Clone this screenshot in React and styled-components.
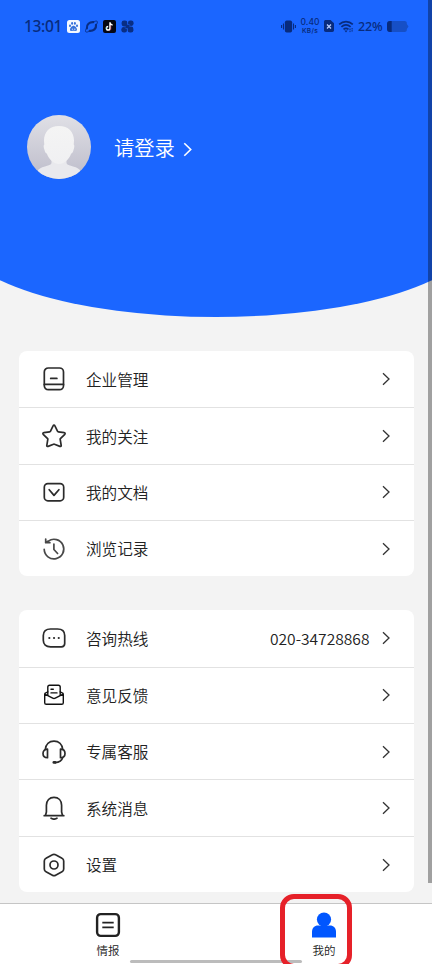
import React from "react";
import styled, { createGlobalStyle } from "styled-components";

const companyItems = [
  { label: "企业管理", icon: <CompanyIcon /> },
  { label: "我的关注", icon: <StarIcon /> },
  { label: "我的文档", icon: <DocumentIcon /> },
  { label: "浏览记录", icon: <HistoryIcon /> },
];

const serviceItems = [
  { label: "咨询热线", icon: <ChatIcon />, value: "020-34728868" },
  { label: "意见反馈", icon: <FeedbackIcon /> },
  { label: "专属客服", icon: <HeadsetIcon /> },
  { label: "系统消息", icon: <BellIcon /> },
  { label: "设置", icon: <SettingsIcon /> },
];

function App() {
  return (
    <Page>
      <GlobalStyle />
      <Hero>
        <StatusBar />
        <Profile>
          <Avatar />
          <Login>请登录</Login>
          <LoginArrow>
            <Chevron width="9" height="15" color="#fff" stroke={1.5} />
          </LoginArrow>
        </Profile>
      </Hero>
      <Menus>
        <MenuCard items={companyItems} />
        <MenuCard items={serviceItems} />
      </Menus>
      <TabBar>
        <Tab>
          <NewsIcon />
          <span>情报</span>
        </Tab>
        <Tab>
          <UserIcon />
          <span>我的</span>
          <Highlight />
        </Tab>
        <HomeIndicator />
      </TabBar>
      <ScrollThumb />
    </Page>
  );
}

export default App;

function StatusBar() {
  return (
    <Status>
      <StatusGroup>
        <Time>13:01</Time>
        <PawIcon />
        <RingIcon />
        <NoteIcon />
        <CloverIcon />
      </StatusGroup>
      <StatusGroup $gap="4px">
        <VibrateIcon />
        <Speed>
          <b>0.40</b>
          <small>KB/s</small>
        </Speed>
        <SimIcon />
        <WifiIcon />
        <Percent>22%</Percent>
        <BatteryIcon />
      </StatusGroup>
    </Status>
  );
}

function MenuCard({ items }) {
  return (
    <Card>
      {items.map((item) => (
        <Row key={item.label}>
          {item.icon}
          <Label>{item.label}</Label>
          {item.value && <Value>{item.value}</Value>}
          <Chevron width="8" height="14" color="#333" stroke={1.3} />
        </Row>
      ))}
    </Card>
  );
}

function Chevron({ width, height, color, stroke }) {
  return (
    <svg width={width} height={height} viewBox="0 0 8 14" fill="none">
      <path d="M1 1.2 7 7l-6 5.8" stroke={color} strokeWidth={stroke} />
    </svg>
  );
}

function Avatar() {
  return (
    <svg width="64" height="64" viewBox="0 0 64 64">
      <defs>
        <linearGradient id="avatarBg" x1="0" y1="0" x2="0" y2="1">
          <stop offset="0" stopColor="#e0e0e6" />
          <stop offset="1" stopColor="#bdbcca" />
        </linearGradient>
        <linearGradient id="avatarBody" x1="0" y1="0" x2="0" y2="1">
          <stop offset="0" stopColor="#f4f4f4" />
          <stop offset="1" stopColor="#f0f0f2" />
        </linearGradient>
        <clipPath id="avatarClip">
          <circle cx="32" cy="32" r="32" />
        </clipPath>
      </defs>
      <g clipPath="url(#avatarClip)">
        <rect width="64" height="64" fill="url(#avatarBg)" />
        <path
          d="M24.500 40v7.500c0 2-1.500 2.500-3.500 3-4.500 1.200-7.500 2.300-10 4.500v9h42v-9c-2.500-2.200-5.500-3.300-10-4.500-2-.5-3.500-1-3.500-3V40z"
          fill="#e9e9ed"
        />
        <path
          d="M32 11c9.500 0 15 6 15 14.500 0 1.500-.2 2.500-.3 4 1 .3.700 3-.2 5.500-.6 2-1.200 3.500-2.300 3.500C42 44.500 37 49 32 49s-10-4.500-12.200-10.500c-1.100 0-1.700-1.500-2.300-3.500-.9-2.500-1.200-5.200-.2-5.500-.1-1.500-.3-2.500-.3-4C17 17 22.500 11 32 11z"
          fill="url(#avatarBody)"
        />
      </g>
    </svg>
  );
}

function CompanyIcon() {
  return (
    <LineIcon viewBox="0 0 24 24">
      <rect x="2.300" y="1" width="19.200" height="21.700" rx="4" />
      <path d="M2.300 17.400h19.200M8.700 11.400h6.200" />
    </LineIcon>
  );
}

function StarIcon() {
  return (
    <LineIcon viewBox="0 0 24 24">
      <path d="M11.200 1.700c.3-.7 1.300-.7 1.600 0l2.800 5.600c.1.300.4.500.7.500l6 .9c.8.100 1 1 .5 1.600l-4.400 4.300c-.2.200-.3.500-.2.800l1 6.100c.1.700-.6 1.200-1.300.9l-5.400-2.100a1 1 0 0 0-1 0l-5.400 2.100c-.7.300-1.400-.2-1.300-.9l1-6.100c.1-.3 0-.6-.2-.8l-4.400-4.300c-.5-.6-.3-1.500.5-1.600l6-.9c.3 0 .6-.2.700-.5z" />
    </LineIcon>
  );
}

function DocumentIcon() {
  return (
    <LineIcon viewBox="0 0 24 24">
      <rect x="2.300" y="3.600" width="19.400" height="17.200" rx="3.600" />
      <path d="m7.200 9.700 4.800 5.700 4.900-5.700" />
    </LineIcon>
  );
}

function HistoryIcon() {
  return (
    <LineIcon viewBox="0 0 24 24" $color="#484848">
      <path d="M2.200 12.300a9.800 9.800 0 1 0 4.100-8.200L3.600 5.500M3.700 2v3.700h4.200M11.900 7v5.500l3.700 4" />
    </LineIcon>
  );
}

function ChatIcon() {
  return (
    <LineIcon viewBox="0 0 24 24">
      <path d="M8.500 3h7c4.500 0 7.200 2.200 7.200 6.500v8c0 2.300-1 3.300-3.300 3.300H8.500c-4.500 0-7.200-2.300-7.200-6.500V9.500C1.300 5.200 4 3 8.500 3z" />
      <path d="M7.300 12h.1M12 12h.1M16.700 12h.1" strokeWidth="2.100" />
    </LineIcon>
  );
}

function FeedbackIcon() {
  return (
    <LineIcon viewBox="0 0 24 24" $color="#111" $stroke={1.4}>
      <path d="M5.800 12.200V4c0-1.200.6-1.800 1.800-1.800h8.800c1.200 0 1.800.6 1.800 1.800v8.200" />
      <path d="M5.800 8.800 3.600 10c-.6.300-.9.800-.9 1.500v8.200c0 1 .6 1.600 1.600 1.600h15.400c1 0 1.600-.6 1.600-1.600v-8.200c0-.7-.3-1.200-.9-1.500l-2.200-1.200M2.900 11.200l7.800 3.900c.8.400 1.800.4 2.600 0l7.800-3.900M9 6.200h2.300M9 9.900h6" />
    </LineIcon>
  );
}

function HeadsetIcon() {
  return (
    <LineIcon viewBox="0 0 24 24">
      <path d="M3.300 9.500C3.700 4.300 7.200 1.100 12 1.100s8.300 3.200 8.700 8.400M20.700 17.500c-.8 3-3.400 4.800-7.500 5.100" />
      <path d="M5.500 9.200c-2.800 0-4.500 1.800-4.500 4.300s1.700 4.200 4.500 4.200zM18.500 9.200c2.800 0 4.500 1.800 4.500 4.300s-1.700 4.200-4.500 4.200z" />
      <path d="M11.800 22.400h1.400" strokeWidth="2.600" />
    </LineIcon>
  );
}

function BellIcon() {
  return (
    <LineIcon viewBox="0 0 24 24">
      <path d="M2.200 19.700h19.600M3.500 19.400l.9-3.400V9.300C4.400 4.500 7.500 1.300 12 1.300s7.600 3.200 7.600 8V16l.9 3.400M9 22.200c1.500 1.300 4.500 1.300 6 0" />
    </LineIcon>
  );
}

function SettingsIcon() {
  return (
    <LineIcon viewBox="0 0 24 24">
      <path d="M10.400 1.800a3.200 3.200 0 0 1 3.200 0l6.400 3.500a3 3 0 0 1 1.700 2.700v8a3 3 0 0 1-1.700 2.700l-6.400 3.500a3.200 3.200 0 0 1-3.200 0L4 18.700A3 3 0 0 1 2.300 16V8A3 3 0 0 1 4 5.300z" />
      <circle cx="12" cy="12" r="4" />
    </LineIcon>
  );
}

function NewsIcon() {
  return (
    <svg width="26" height="26" viewBox="0 0 26 26" fill="none" stroke="#222">
      <rect x="2.100" y="2.100" width="21.800" height="21.800" rx="3.600" strokeWidth="2.400" />
      <path d="M7.300 10.600h11.400M7.300 15.400h11.400" strokeWidth="1.800" />
    </svg>
  );
}

function UserIcon() {
  return (
    <svg width="26" height="26" viewBox="0 0 26 26" fill="#0056ff">
      <circle cx="13" cy="7.500" r="7.100" />
      <path d="M1 25.500v-5.700c0-4 2.500-6.300 6-6.300h12c3.500 0 6 2.300 6 6.300v5.700z" />
    </svg>
  );
}

function PawIcon() {
  return (
    <svg width="13" height="13" viewBox="0 0 13 13">
      <rect width="13" height="13" rx="2.500" fill="#f4f8ff" />
      <g fill="#3470da">
        <ellipse cx="3" cy="5.700" rx="1" ry="1.300" />
        <ellipse cx="5.100" cy="3.400" rx="1" ry="1.300" />
        <ellipse cx="7.900" cy="3.400" rx="1" ry="1.300" />
        <ellipse cx="10" cy="5.700" rx="1" ry="1.300" />
        <path d="M6.500 5.800c1.500 0 3.500 2.400 3.500 3.700 0 1.900-2.200 1.300-3.500 1.300s-3.500.6-3.500-1.300c0-1.300 2-3.700 3.500-3.700z" />
      </g>
      <path d="M4.800 9.200h1.300M7 9.200h1.500" stroke="#fff" strokeWidth="0.800" />
    </svg>
  );
}

function RingIcon() {
  return (
    <svg width="13" height="13" viewBox="0 0 13 13">
      <g fill="none" stroke="#092e84" strokeLinecap="round">
        <path d="M1.900 8.300C1.300 4.500 4.500 2 8.300 2.200" strokeWidth="2.200" />
        <path d="M11 4.900c.5 3.800-2.600 6.200-6.300 6" strokeWidth="2.200" />
        <path
          d="M1.500 8.300C.3 10 .1 11.300.9 11.900c.8.500 2.200 0 3.800-.9M8.300 2c1.900-1 3.300-1.200 3.900-.6.500.6.100 2-1 3.600"
          strokeWidth="0.900"
        />
      </g>
    </svg>
  );
}

function NoteIcon() {
  return (
    <svg width="13" height="13" viewBox="0 0 13 13">
      <rect width="13" height="13" rx="2" fill="#050713" />
      <g fill="none" strokeWidth="1.500">
        <path d="M7 2.300v6a1.800 1.800 0 1 1-1.800-1.800M7 2.500c.2 1.500 1.200 2.400 2.600 2.500" stroke="#fff" />
        <path d="M7.900 5.500v3.200c0 1-.6 1.800-1.700 2.100" stroke="#e9426b" strokeWidth="0.500" />
        <path d="M4 7a2 2 0 0 0-.7 2.300" stroke="#35d3dc" strokeWidth="0.500" />
      </g>
    </svg>
  );
}

function CloverIcon() {
  return (
    <svg width="13" height="13" viewBox="0 0 13 13">
      <g fill="#092e84">
        <rect x="0.600" y="0.400" width="5.800" height="6" rx="2.400" />
        <rect x="6.900" y="0.400" width="5.700" height="5.600" rx="2.400" />
        <rect x="0.400" y="6.900" width="5.700" height="5.700" rx="2.400" />
        <rect x="6.600" y="6.600" width="5.800" height="6" rx="2.400" />
        <rect x="4.500" y="4.500" width="4" height="4" />
      </g>
      <path d="M6.700.8v3.600c1.200 0 2 .3 2.700 1M6.300 12.200V8.600c-1.200 0-2-.3-2.700-1" fill="none" stroke="#1b66ff" strokeWidth="0.500" />
    </svg>
  );
}

function VibrateIcon() {
  return (
    <svg width="15" height="13" viewBox="0 0 15 13" fill="#082b7d">
      <rect x="3.900" y="0.500" width="7.200" height="12" rx="1.800" />
      <path d="M2.500 3.500v6M.6 5v3M12.500 3.500v6M14.400 5v3" stroke="#082b7d" strokeWidth="1.100" />
    </svg>
  );
}

function SimIcon() {
  return (
    <svg width="10" height="12" viewBox="0 0 10 12">
      <path d="M1.800 0h4.700L10 3.300v7c0 1-.7 1.700-1.700 1.700H1.800C.8 12 0 11.300 0 10.300V1.700C0 .7.800 0 1.800 0z" fill="#082b7d" />
      <path d="m3 4.500 4 4m0-4-4 4" stroke="#b7cdfd" strokeWidth="1.300" />
    </svg>
  );
}

function WifiIcon() {
  return (
    <svg width="16" height="13" viewBox="0 0 15 13" fill="none" stroke="#082b7d" strokeWidth="1.700">
      <path d="M.7 4.300c4-3.700 9.600-3.700 13.600 0M2.900 6.900c2.800-2.500 6.400-2.500 9.200 0M5 9.300c1.600-1.300 3.400-1.300 5 0" />
      <path d="m5.900 10.600 1.600 1.900 1.600-1.900z" fill="#082b7d" stroke="none" />
      <path d="M11.500 8.500v3.800M13.600 8v4" strokeWidth="1" strokeDasharray="1.500 .6" />
    </svg>
  );
}

function BatteryIcon() {
  return (
    <svg width="22" height="11" viewBox="0 0 22 11">
      <path d="M3 0h14.500c1.500 0 2.300.8 2.300 2v1l1.700 2.500L19.800 8v1c0 1.200-.8 2-2.300 2H3c-2 0-3-1-3-3V3c0-2 1-3 3-3z" fill="#164fc6" />
      <path d="M3 0h1.700v11H3c-2 0-3-1-3-3V3c0-2 1-3 3-3z" fill="#082b7d" />
    </svg>
  );
}

const GlobalStyle = createGlobalStyle`
  * {
    box-sizing: border-box;
  }
  body {
    margin: 0;
    overflow: hidden;
    background: #f3f3f3;
    font-family: "Noto Sans CJK SC", "Noto Sans", sans-serif;
    font-weight: 350;
  }
  svg {
    display: block;
    flex-shrink: 0;
  }
`;

const Page = styled.div`
  position: relative;
  width: 432px;
  height: 964px;
  overflow: hidden;
  display: flex;
  flex-direction: column;
`;

const Hero = styled.header`
  position: relative;
  height: 317px;
  flex-shrink: 0;
  overflow: hidden;
  isolation: isolate;
  &::before {
    content: "";
    position: absolute;
    z-index: -1;
    top: 0;
    left: -10%;
    width: 120%;
    height: 100%;
    background: #1b66ff;
    border-radius: 0 0 50% 50% / 0 0 82px 82px;
  }
`;

const Status = styled.div`
  display: flex;
  justify-content: space-between;
  height: 52px;
  padding: 0 23px 0 24px;
  color: #082b7d;
`;

const StatusGroup = styled.div`
  display: flex;
  align-items: center;
  gap: ${(props) => props.$gap || "5px"};
`;

const Time = styled.span`
  width: 38px;
  padding-bottom: 1px;
  font: 500 15.5px/20px "Noto Sans", sans-serif;
  letter-spacing: -0.35px;
`;

const Speed = styled.div`
  display: flex;
  flex-direction: column;
  align-items: center;
  width: 20px;
  font-family: Inter, sans-serif;
  b {
    font-size: 8.5px;
    font-weight: 500;
    line-height: 9px;
  }
  small {
    font-size: 6.5px;
    font-weight: 600;
    line-height: 8px;
    letter-spacing: 0.3px;
  }
`;

const Percent = styled.span`
  width: 25px;
  font: 500 12.5px/20px "Noto Sans", sans-serif;
  letter-spacing: -0.1px;
  padding-top: 1px;
`;

const Profile = styled.div`
  display: flex;
  align-items: center;
  padding: 63px 27px 0;
`;

const Login = styled.span`
  margin: 0 8px 0 23px;
  color: white;
  font-size: 20.3px;
  line-height: 30px;
`;

const LoginArrow = styled.span`
  padding-top: 5px;
`;

const Menus = styled.main`
  flex: 1;
  display: flex;
  flex-direction: column;
  gap: 33.9px;
  padding: 33.800px 18px 0 19px;
`;

const Card = styled.section`
  background: white;
  border-radius: 8px;
`;

const Row = styled.div`
  display: flex;
  align-items: center;
  height: 56.4px;
  padding: 0 24.500px 0 23px;
  color: #222;
  & + & {
    border-top: 1px solid #e2e2e2;
  }
`;

const LineIcon = styled.svg`
  width: 24px;
  height: 24px;
  fill: none;
  stroke: ${(props) => props.$color || "#2b2b2b"};
  stroke-width: ${(props) => props.$stroke || 1.7};
  stroke-linecap: round;
  stroke-linejoin: round;
`;

const Label = styled.span`
  flex: 1;
  margin-left: 20px;
  padding-bottom: 0.5px;
  font-size: 15.6px;
`;

const Value = styled.span`
  margin-right: 12px;
  padding-bottom: 0.5px;
  font-size: 15.6px;
`;

const TabBar = styled.nav`
  position: relative;
  display: flex;
  height: 61px;
  background: white;
  border-top: 1px solid #c5c5c5;
`;

const Tab = styled.div`
  position: relative;
  flex: 1;
  display: flex;
  flex-direction: column;
  align-items: center;
  padding-top: 8px;
  color: #222;
  font-size: 11.5px;
  line-height: 24px;
`;

/* frame drawn over the active tab */
const Highlight = styled.div`
  position: absolute;
  z-index: 1;
  top: -10px;
  left: 64px;
  width: 72px;
  height: 75px;
  border: 5px solid #e62129;
  border-radius: 14px;
`;

const HomeIndicator = styled.div`
  position: absolute;
  left: 130px;
  bottom: 1px;
  width: 172px;
  height: 3px;
  border-radius: 2px;
  background: #bcbcbc;
`;

const ScrollThumb = styled.div`
  position: absolute;
  top: 0;
  right: 0;
  width: 4px;
  height: 883px;
  background: rgba(0, 0, 0, 0.34);
`;
